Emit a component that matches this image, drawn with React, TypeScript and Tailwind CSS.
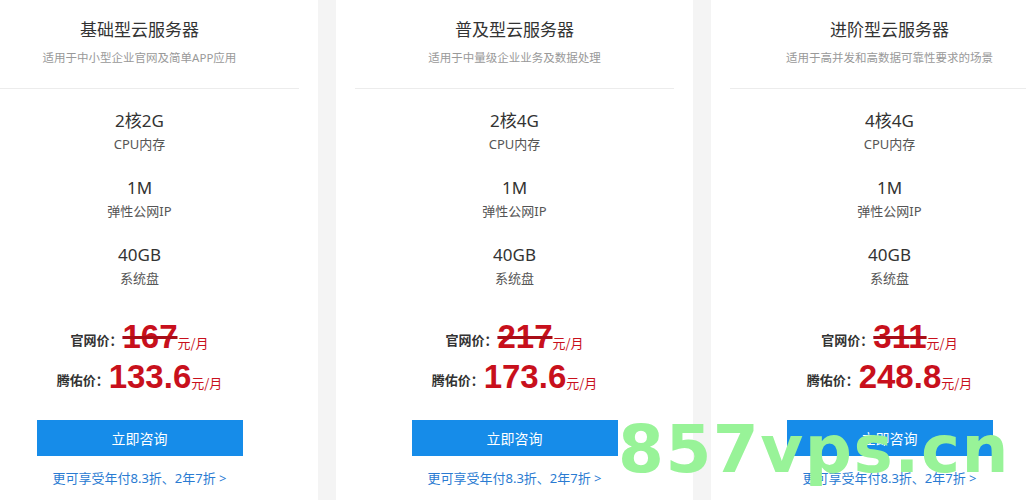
import React from 'react';

interface Plan {
  title: string;
  desc: string;
  cpu: string;
  bandwidth: string;
  disk: string;
  listPrice: string;
  price: string;
}

const plans: Plan[] = [
  {
    title: '基础型云服务器',
    desc: '适用于中小型企业官网及简单APP应用',
    cpu: '2核2G',
    bandwidth: '1M',
    disk: '40GB',
    listPrice: '167',
    price: '133.6',
  },
  {
    title: '普及型云服务器',
    desc: '适用于中量级企业业务及数据处理',
    cpu: '2核4G',
    bandwidth: '1M',
    disk: '40GB',
    listPrice: '217',
    price: '173.6',
  },
  {
    title: '进阶型云服务器',
    desc: '适用于高并发和高数据可靠性要求的场景',
    cpu: '4核4G',
    bandwidth: '1M',
    disk: '40GB',
    listPrice: '311',
    price: '248.8',
  },
];

const sans = { fontFamily: '"Noto Sans", "Noto Sans CJK SC", sans-serif' };
const cjk = { fontFamily: '"Noto Sans CJK SC", sans-serif' };
const digits = { fontFamily: '"Liberation Sans", Arial, sans-serif' };

const Spec = ({ value, label }: { value: string; label: string }) => (
  <div className="flex flex-col items-center">
    <div className="text-[17px] leading-[24px] text-[#333]">{value}</div>
    <div className="mt-[2px] text-[13px] leading-[18px] text-[#555]">{label}</div>
  </div>
);

const PriceRow = ({ label, value, strike }: { label: string; value: string; strike?: boolean }) => (
  <div className="flex h-10 items-center justify-center">
    <span className="text-[13px] font-bold leading-[20px] text-[#333]" style={cjk}>
      {label}：
    </span>
    <span className="leading-[40px] text-[#c8101c]">
      <span
        className={`text-[33px] font-bold ${strike ? 'line-through decoration-[#a80d17]' : ''}`}
        style={digits}
      >
        {value}
      </span>
      <span className="text-[13px]" style={cjk}>元/月</span>
    </span>
  </div>
);

const PlanCard = ({ plan }: { plan: Plan }) => (
  <div className="flex h-[500px] w-[357px] shrink-0 flex-col bg-white" style={sans}>
    <div className="pt-[18px] text-center">
      <h3 className="text-[17px] leading-[24px] text-[#333]">{plan.title}</h3>
      <p className="mt-2 text-[11.5px] leading-[16px] text-[#999]">{plan.desc}</p>
    </div>
    <div className="mx-[19px] mt-[22px] h-px bg-[#ececec]" />
    <div className="mt-5 flex flex-col gap-[23px]">
      <Spec value={plan.cpu} label="CPU内存" />
      <Spec value={plan.bandwidth} label="弹性公网IP" />
      <Spec value={plan.disk} label="系统盘" />
    </div>
    <div className="mt-[33px]">
      <PriceRow label="官网价" value={plan.listPrice} strike />
      <PriceRow label="腾佑价" value={plan.price} />
    </div>
    <button className="mx-auto mt-5 h-9 w-[206px] bg-[#168ce9] text-[14px] text-white" style={cjk}>
      立即咨询
    </button>
    <a className="mt-3 text-center text-[13px] leading-[20px] text-[#2a7bd2]" href="#">
      更可享受年付8.3折、2年7折 &gt;
    </a>
  </div>
);

export default function App() {
  return (
    <div className="relative h-[500px] w-full overflow-hidden bg-[#f4f4f4]">
      <div className="flex justify-center gap-[18px] pl-[3px]">
        {plans.map((p) => (
          <PlanCard key={p.title} plan={p} />
        ))}
      </div>
      {/* watermark */}
      <div
        className="pointer-events-none absolute left-[618px] top-[417px] text-[66px] font-bold leading-[66px] tracking-[1.5px] text-[#98f398]"
        style={{ fontFamily: '"DejaVu Sans", sans-serif' }}
      >
        857vps.cn
      </div>
    </div>
  );
}
